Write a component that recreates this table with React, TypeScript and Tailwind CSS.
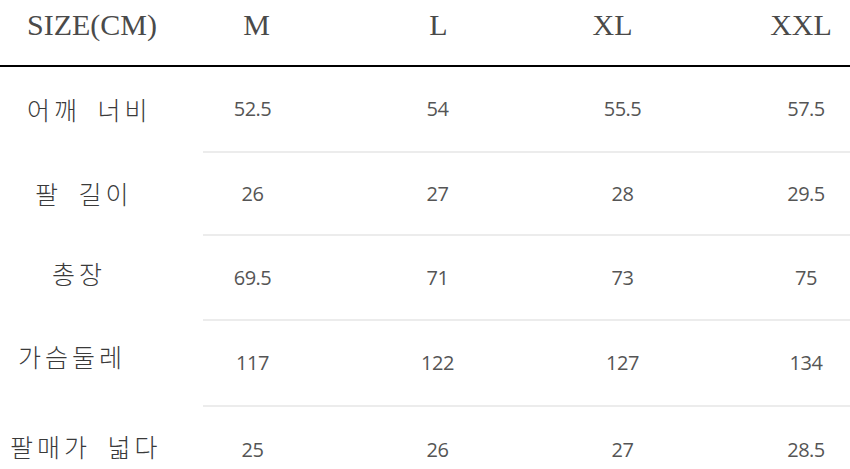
const SIZES = ['M', 'L', 'XL', 'XXL'];

const ROWS = [
  {label: '어깨 너비', values: ['52.5', '54', '55.5', '57.5'], h: 'h-[84px]', lc: 'pl-[27px]'},
  {label: '팔 길이', values: ['26', '27', '28', '29.5'], h: 'h-[81px]', lc: 'pl-[35px]'},
  {label: '총장', values: ['69.5', '71', '73', '75'], h: 'h-[83px]', lc: 'pl-[52px] pb-[8px]'},
  {label: '가슴둘레', values: ['117', '122', '127', '134'], h: 'h-[84px]', lc: 'pl-[18px] pb-[14px]'},
  {label: '팔매가 넓다', values: ['25', '26', '27', '28.5'], h: 'h-[86px]', lc: 'pl-[10px] pb-[8px]'},
];

const headShift = ['pl-[8px]', 'pl-[2px]', 'pr-[20px]', 'pr-[10px]'];

export default function App() {
  return (
    <div className="h-[469px] w-[850px] overflow-hidden bg-white">
      <div className="grid h-[65px] grid-cols-[160px_185px_185px_185px_182px] items-start pt-[10px] font-['Liberation_Serif',serif] text-[30px] leading-[30px] text-[#4a4a4a]">
        <div className="whitespace-nowrap pl-[27px]">SIZE(CM)</div>
        {SIZES.map((s, i) => (
          <div key={s} className={`text-center ${headShift[i]}`}>
            {s}
          </div>
        ))}
      </div>
      <div className="h-[2px] bg-black" />

      {ROWS.map((row, ri) => (
        <div key={row.label}>
          <div
            className={`grid grid-cols-[160px_185px_185px_185px_182px] items-center ${row.h}`}
          >
            <div
              className={`whitespace-pre font-['Noto_Sans_CJK_KR',sans-serif] text-[25px] font-light leading-none tracking-[4px] text-[#3a3a3a] [word-spacing:7px] ${row.lc}`}
            >
              {row.label}
            </div>
            {row.values.map((v, i) => (
              <div
                key={i}
                className="text-center font-['Open_Sans',sans-serif] text-[20px] leading-none tracking-[-0.5px] text-[#555]"
              >
                {v}
              </div>
            ))}
          </div>
          {ri < ROWS.length - 1 ? (
            <div className="ml-[203px] h-[2px] bg-[#ececec]" />
          ) : null}
        </div>
      ))}
    </div>
  );
}
